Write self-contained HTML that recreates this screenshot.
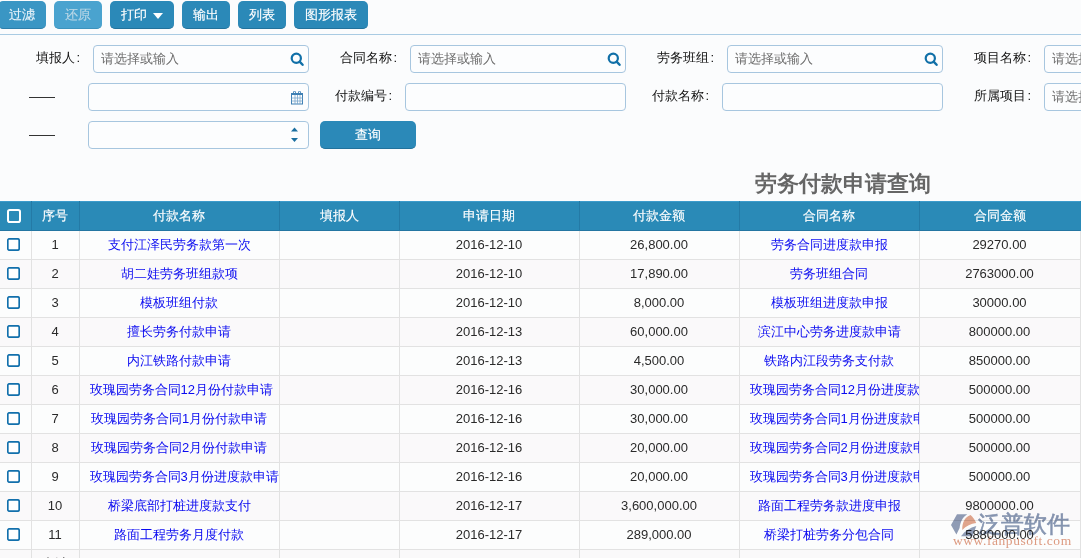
<!DOCTYPE html>
<html><head><meta charset="utf-8">
<style>
*{box-sizing:border-box;margin:0;padding:0}
html,body{width:1081px;height:558px;overflow:hidden;background:#fbfcfd;font-family:"Liberation Sans",sans-serif;font-size:13px;color:#333}
.abs{position:absolute}
th,.btn{-webkit-text-stroke:0.15px currentColor}
.btn{position:absolute;top:1px;height:28px;border-radius:5px;background:#2b89b8;color:#fff;font-size:13px;line-height:27px;text-align:center;border-bottom:1px solid #22729c}
.sep{position:absolute;left:0;top:34px;width:1081px;height:1px;background:#a9cbe3}
.lbl{position:absolute;font-size:13px;color:#111;line-height:16px;white-space:nowrap}
.inp{position:absolute;height:28px;border:1px solid #a7c6df;border-radius:4px;background:#fcfdfe}
.ph{position:absolute;left:7px;top:5px;font-size:13px;line-height:16px;color:#6c6c6c;white-space:nowrap}
.dash{position:absolute;left:29px;width:26px;height:1px;background:#333}
.title{position:absolute;left:755px;top:170px;font-size:22px;font-weight:bold;color:#666;line-height:28px;white-space:nowrap}
table{position:absolute;left:0;top:201px;border-collapse:collapse;table-layout:fixed;width:1080px}
th{box-shadow:inset 0 1px 0 #3c9bcb,inset 0 -1px 0 #2476a2;background:#2a8ab7;color:#fff;font-weight:normal;height:30px;font-size:13px;border-left:1px solid #247aa6;padding:0;text-align:center}
th:first-child{border-left:none}
th:last-child{border-right:1px solid #2a8ab7}
td{height:29px;border:1px solid #e2e2e2;border-top:none;padding:0 10px;text-align:center;white-space:nowrap;overflow:hidden;color:#2a2a2a;background:#fcfdfd}
td:first-child{border-left:none;padding:0}
td:last-child{border-right:1px solid #e2e2e2}
tr.r1 td{height:28px}
tr:nth-child(2n+3) td{background:#faf9fa}
td a{color:#0a0af0;text-decoration:none}
.cb{display:inline-block;vertical-align:middle;margin-left:-4px;position:relative;top:-1px}
th .cb{display:inline-block;vertical-align:middle;margin-left:-4px;position:relative;top:-1px}
</style></head><body>
<div class="btn" style="left:-2px;width:48px;background:#3a96c4;color:#e8f3f9;border-bottom-color:#2c7eaa">过滤</div>
<div class="btn" style="left:54px;width:48px;background:#4aa3cf;color:#b9d7e6;border-bottom-color:#3d93bd">还原</div>
<div class="btn" style="left:110px;width:64px">打印 <span style="display:inline-block;width:0;height:0;border-left:5px solid transparent;border-right:5px solid transparent;border-top:6px solid #fff;vertical-align:middle;margin-left:3px"></span></div>
<div class="btn" style="left:182px;width:48px">输出</div>
<div class="btn" style="left:238px;width:48px">列表</div>
<div class="btn" style="left:294px;width:74px">图形报表</div>
<div class="sep"></div>

<!-- row 1 -->
<div class="lbl" style="left:36px;top:50px">填报人<span style="margin-left:1.5px">:</span></div>
<div class="inp" style="left:93px;top:45px;width:216px"><span class="ph">请选择或输入</span>
<svg class="abs" style="left:195px;top:6px" width="16" height="16" viewBox="0 0 16 16"><circle cx="7.3" cy="6.3" r="4.6" fill="none" stroke="#1170a8" stroke-width="2.2"/><line x1="10.6" y1="9.6" x2="13.6" y2="12.8" stroke="#1170a8" stroke-width="2.4" stroke-linecap="round"/></svg></div>
<div class="lbl" style="left:340px;top:50px">合同名称<span style="margin-left:1.5px">:</span></div>
<div class="inp" style="left:410px;top:45px;width:216px"><span class="ph">请选择或输入</span>
<svg class="abs" style="left:195px;top:6px" width="16" height="16" viewBox="0 0 16 16"><circle cx="7.3" cy="6.3" r="4.6" fill="none" stroke="#1170a8" stroke-width="2.2"/><line x1="10.6" y1="9.6" x2="13.6" y2="12.8" stroke="#1170a8" stroke-width="2.4" stroke-linecap="round"/></svg></div>
<div class="lbl" style="left:657px;top:50px">劳务班组<span style="margin-left:1.5px">:</span></div>
<div class="inp" style="left:727px;top:45px;width:216px"><span class="ph">请选择或输入</span>
<svg class="abs" style="left:195px;top:6px" width="16" height="16" viewBox="0 0 16 16"><circle cx="7.3" cy="6.3" r="4.6" fill="none" stroke="#1170a8" stroke-width="2.2"/><line x1="10.6" y1="9.6" x2="13.6" y2="12.8" stroke="#1170a8" stroke-width="2.4" stroke-linecap="round"/></svg></div>
<div class="lbl" style="left:974px;top:50px">项目名称<span style="margin-left:1.5px">:</span></div>
<div class="inp" style="left:1044px;top:45px;width:216px"><span class="ph">请选择或输入</span></div>

<!-- row 2 -->
<div class="dash" style="top:97px"></div>
<div class="inp" style="left:88px;top:83px;width:221px">
<svg class="abs" style="left:202px;top:7px" width="13" height="14" viewBox="0 0 13 14"><g stroke="#3f80b4" fill="none"><rect x="0.5" y="2.5" width="11" height="10.5" stroke-width="1"/><line x1="0.5" y1="3.5" x2="11.5" y2="3.5" stroke-width="1"/><line x1="4" y1="4" x2="4" y2="13" stroke-width="0.8" stroke="#7aa6cc"/><line x1="6.5" y1="4" x2="6.5" y2="13" stroke-width="0.8" stroke="#7aa6cc"/><line x1="9" y1="4" x2="9" y2="13" stroke-width="0.8" stroke="#7aa6cc"/><line x1="0.5" y1="7" x2="11.5" y2="7" stroke-width="0.8" stroke="#7aa6cc"/><line x1="0.5" y1="10" x2="11.5" y2="10" stroke-width="0.8" stroke="#7aa6cc"/><path d="M2.5 3 V1.2 a1 1 0 0 1 2 0 V3" stroke-width="1"/><path d="M7.5 3 V1.2 a1 1 0 0 1 2 0 V3" stroke-width="1"/></g></svg></div>
<div class="lbl" style="left:335px;top:88px">付款编号<span style="margin-left:1.5px">:</span></div>
<div class="inp" style="left:405px;top:83px;width:221px"></div>
<div class="lbl" style="left:652px;top:88px">付款名称<span style="margin-left:1.5px">:</span></div>
<div class="inp" style="left:722px;top:83px;width:221px"></div>
<div class="lbl" style="left:974px;top:88px">所属项目<span style="margin-left:1.5px">:</span></div>
<div class="inp" style="left:1044px;top:83px;width:216px"><span class="ph">请选择或输入</span></div>

<!-- row 3 -->
<div class="dash" style="top:135px"></div>
<div class="inp" style="left:88px;top:121px;width:221px">
<svg class="abs" style="left:202px;top:5px" width="8" height="16" viewBox="0 0 8 16"><path d="M0 4.6 L3.5 0.4 L7 4.6Z" fill="#1b6fa0"/><path d="M0 11 L7 11 L3.5 15Z" fill="#1b6fa0"/></svg></div>
<div class="btn" style="left:320px;top:121px;width:96px;height:28px">查询</div>

<div class="title">劳务付款申请查询</div>

<table>
<colgroup><col style="width:31px"><col style="width:48px"><col style="width:200px"><col style="width:120px"><col style="width:180px"><col style="width:160px"><col style="width:180px"><col style="width:161px"></colgroup>
<tr><th><svg class="cb" style="top:-0.5px;margin-left:-3px" width="14" height="14" viewBox="0 0 14 14"><rect x="1" y="1" width="12" height="12" rx="1.8" fill="none" stroke="#fff" stroke-width="2"/></svg></th><th>序号</th><th>付款名称</th><th>填报人</th><th>申请日期</th><th>付款金额</th><th>合同名称</th><th>合同金额</th></tr>
<tr class="r1"><td><svg class="cb" width="13" height="13" viewBox="0 0 13 13"><rect x="0.8" y="0.8" width="11.4" height="11.4" rx="1.6" fill="#fff" stroke="#1270ac" stroke-width="1.7"/></svg></td><td>1</td><td><a>支付江泽民劳务款第一次</a></td><td></td><td>2016-12-10</td><td>26,800.00</td><td><a>劳务合同进度款申报</a></td><td>29270.00</td></tr>
<tr><td><svg class="cb" width="13" height="13" viewBox="0 0 13 13"><rect x="0.8" y="0.8" width="11.4" height="11.4" rx="1.6" fill="#fff" stroke="#1270ac" stroke-width="1.7"/></svg></td><td>2</td><td><a>胡二娃劳务班组款项</a></td><td></td><td>2016-12-10</td><td>17,890.00</td><td><a>劳务班组合同</a></td><td>2763000.00</td></tr>
<tr><td><svg class="cb" width="13" height="13" viewBox="0 0 13 13"><rect x="0.8" y="0.8" width="11.4" height="11.4" rx="1.6" fill="#fff" stroke="#1270ac" stroke-width="1.7"/></svg></td><td>3</td><td><a>模板班组付款</a></td><td></td><td>2016-12-10</td><td>8,000.00</td><td><a>模板班组进度款申报</a></td><td>30000.00</td></tr>
<tr><td><svg class="cb" width="13" height="13" viewBox="0 0 13 13"><rect x="0.8" y="0.8" width="11.4" height="11.4" rx="1.6" fill="#fff" stroke="#1270ac" stroke-width="1.7"/></svg></td><td>4</td><td><a>擅长劳务付款申请</a></td><td></td><td>2016-12-13</td><td>60,000.00</td><td><a>滨江中心劳务进度款申请</a></td><td>800000.00</td></tr>
<tr><td><svg class="cb" width="13" height="13" viewBox="0 0 13 13"><rect x="0.8" y="0.8" width="11.4" height="11.4" rx="1.6" fill="#fff" stroke="#1270ac" stroke-width="1.7"/></svg></td><td>5</td><td><a>内江铁路付款申请</a></td><td></td><td>2016-12-13</td><td>4,500.00</td><td><a>铁路内江段劳务支付款</a></td><td>850000.00</td></tr>
<tr><td><svg class="cb" width="13" height="13" viewBox="0 0 13 13"><rect x="0.8" y="0.8" width="11.4" height="11.4" rx="1.6" fill="#fff" stroke="#1270ac" stroke-width="1.7"/></svg></td><td>6</td><td><a>玫瑰园劳务合同12月份付款申请</a></td><td></td><td>2016-12-16</td><td>30,000.00</td><td><a>玫瑰园劳务合同12月份进度款申报</a></td><td>500000.00</td></tr>
<tr><td><svg class="cb" width="13" height="13" viewBox="0 0 13 13"><rect x="0.8" y="0.8" width="11.4" height="11.4" rx="1.6" fill="#fff" stroke="#1270ac" stroke-width="1.7"/></svg></td><td>7</td><td><a>玫瑰园劳务合同1月份付款申请</a></td><td></td><td>2016-12-16</td><td>30,000.00</td><td><a>玫瑰园劳务合同1月份进度款申报</a></td><td>500000.00</td></tr>
<tr><td><svg class="cb" width="13" height="13" viewBox="0 0 13 13"><rect x="0.8" y="0.8" width="11.4" height="11.4" rx="1.6" fill="#fff" stroke="#1270ac" stroke-width="1.7"/></svg></td><td>8</td><td><a>玫瑰园劳务合同2月份付款申请</a></td><td></td><td>2016-12-16</td><td>20,000.00</td><td><a>玫瑰园劳务合同2月份进度款申报</a></td><td>500000.00</td></tr>
<tr><td><svg class="cb" width="13" height="13" viewBox="0 0 13 13"><rect x="0.8" y="0.8" width="11.4" height="11.4" rx="1.6" fill="#fff" stroke="#1270ac" stroke-width="1.7"/></svg></td><td>9</td><td><a>玫瑰园劳务合同3月份进度款申请</a></td><td></td><td>2016-12-16</td><td>20,000.00</td><td><a>玫瑰园劳务合同3月份进度款申报</a></td><td>500000.00</td></tr>
<tr><td><svg class="cb" width="13" height="13" viewBox="0 0 13 13"><rect x="0.8" y="0.8" width="11.4" height="11.4" rx="1.6" fill="#fff" stroke="#1270ac" stroke-width="1.7"/></svg></td><td>10</td><td><a>桥梁底部打桩进度款支付</a></td><td></td><td>2016-12-17</td><td>3,600,000.00</td><td><a>路面工程劳务款进度申报</a></td><td>9800000.00</td></tr>
<tr><td><svg class="cb" width="13" height="13" viewBox="0 0 13 13"><rect x="0.8" y="0.8" width="11.4" height="11.4" rx="1.6" fill="#fff" stroke="#1270ac" stroke-width="1.7"/></svg></td><td>11</td><td><a>路面工程劳务月度付款</a></td><td></td><td>2016-12-17</td><td>289,000.00</td><td><a>桥梁打桩劳务分包合同</a></td><td>5880000.00</td></tr>
<tr><td></td><td>合计</td><td></td><td></td><td></td><td></td><td></td><td></td></tr>
</table>

<svg class="abs" style="left:948px;top:510px;opacity:0.8;mix-blend-mode:multiply" width="34" height="30" viewBox="948 510 34 30"><path d="M951,525 L957,514.2 L967.3,514.2 C962.5,517 960.3,522 959.6,528 L956.4,534.6 Z" fill="#7585a5"/><path d="M962.3,530 C962,523 964.5,517 970.6,515 C973,517 975,520 976.2,523 C971,523.5 966,526 962.3,530 Z" fill="#dc9070"/><path d="M961,536.2 C965,531 970,527.5 976.3,526 L972.5,536.2 Z" fill="#7585a5"/></svg>
<div class="abs" style="mix-blend-mode:multiply;left:978px;top:511px;font-size:23px;line-height:26px;color:#8796b2;-webkit-text-stroke:0.6px #8796b2;white-space:nowrap">泛普软件</div>
<div class="abs" style="mix-blend-mode:multiply;left:953px;top:534px;font-family:'Liberation Serif',serif;font-size:13.5px;line-height:14px;color:#e09c82;white-space:nowrap;letter-spacing:0.55px">www.fanpusoft.com</div>
</body></html>
